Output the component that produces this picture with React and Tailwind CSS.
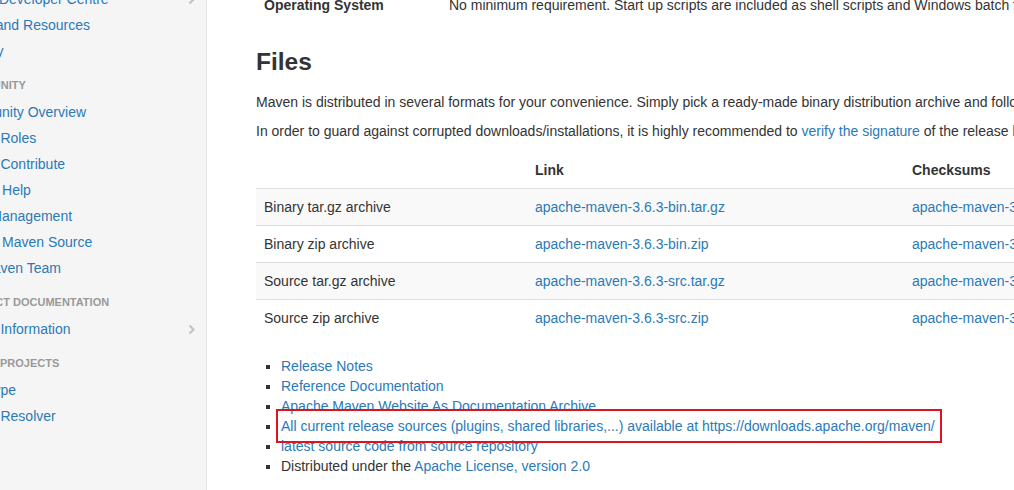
const blue = "text-[#2a7ab8]";

const Chevron = () => (
  <svg width="8" height="11" viewBox="0 0 8 11" fill="none">
    <path d="M1.5 1.5 L5.5 5.5 L1.5 9.5" stroke="#c4c4c4" strokeWidth="2.2" />
  </svg>
);

const sideNav = [
  { label: "Maven Developer Centre", more: true },
  { label: "Books and Resources" },
  { label: "Security" },
  { header: "Community" },
  { label: "Community Overview" },
  { label: "Project Roles" },
  { label: "How to Contribute" },
  { label: "Getting Help" },
  { label: "Issue Management" },
  { label: "Getting Maven Source" },
  { label: "The Maven Team" },
  { header: "Project Documentation" },
  { label: "Project Information", more: true },
  { header: "Maven Projects" },
  { label: "Archetype" },
  { label: "Artifact Resolver" },
];

const files = [
  { name: "Binary tar.gz archive", file: "apache-maven-3.6.3-bin.tar.gz" },
  { name: "Binary zip archive", file: "apache-maven-3.6.3-bin.zip" },
  { name: "Source tar.gz archive", file: "apache-maven-3.6.3-src.tar.gz" },
  { name: "Source zip archive", file: "apache-maven-3.6.3-src.zip" },
];

function Sidebar() {
  return (
    <aside className="w-[207px] shrink-0 h-full bg-[#f5f5f5] border-r border-[#e3e3e3] overflow-hidden">
      <div className="-ml-[47px] -mt-[14px] pr-[10px] whitespace-nowrap">
        {sideNav.map((item, i) =>
          item.header ? (
            <div
              key={i}
              className="mt-[11px] mb-[4px] h-[20px] leading-[20px] pl-[5px] text-[11px] font-bold uppercase text-[#999]"
            >
              {item.header}
            </div>
          ) : (
            <div key={i} className="flex items-center justify-between h-[26px] text-[14px]">
              <span className={blue}>{item.label}</span>
              {item.more && <Chevron />}
            </div>
          )
        )}
      </div>
    </aside>
  );
}

function FilesTable() {
  return (
    <table className="w-[1200px] border-collapse text-[14px] leading-[20px] mb-[20px]">
      <thead>
        <tr className="text-left">
          <th className="w-[271px] px-[8px] py-[8px]"></th>
          <th className="w-[377px] px-[8px] py-[8px] font-bold">Link</th>
          <th className="px-[8px] py-[8px] font-bold">Checksums</th>
        </tr>
      </thead>
      <tbody>
        {files.map((f, i) => (
          <tr key={f.name} className={i % 2 === 0 ? "bg-[#f9f9f9]" : "bg-white"}>
            <td className="px-[8px] py-[8px] border-t border-[#ddd]">{f.name}</td>
            <td className={`px-[8px] py-[8px] border-t border-[#ddd] ${blue}`}>{f.file}</td>
            <td className={`px-[8px] py-[8px] border-t border-[#ddd] ${blue}`}>{f.file}.sha512</td>
          </tr>
        ))}
      </tbody>
    </table>
  );
}

export default function App() {
  return (
    <div
      className="w-[1014px] h-[490px] overflow-hidden flex bg-white text-[#333]"
      style={{ fontFamily: '"Liberation Sans", Arial, sans-serif' }}
    >
      <Sidebar />
      <main className="flex-1 min-w-0 overflow-hidden pl-[49px] whitespace-nowrap">
        <div className="-mt-[13px] flex text-[14px] leading-[20px]">
          <div className="w-[185px] shrink-0 p-[8px] font-bold">Operating System</div>
          <div className="p-[8px]">
            No minimum requirement. Start up scripts are included as shell scripts and Windows batch files.
          </div>
        </div>

        <h2 className="mt-[19px] mb-[10px] h-[40px] leading-[40px] text-[24.5px] font-bold">Files</h2>

        <p className="text-[14px] leading-[20px] mb-[9px]">
          Maven is distributed in several formats for your convenience. Simply pick a ready-made binary distribution archive and follow the installation instructions.
        </p>
        <p className="text-[14px] leading-[20px] mb-[11px]">
          In order to guard against corrupted downloads/installations, it is highly recommended to{" "}
          <span className={blue}>verify the signature</span> of the release bundles against the public KEYS used by the Apache Maven developers.
        </p>

        <FilesTable />

        <ul className="list-[square] pl-[25px] text-[14px] leading-[20px] marker:text-[#333]">
          <li className={blue}>Release Notes</li>
          <li className={blue}>Reference Documentation</li>
          <li className={blue}>Apache Maven Website As Documentation Archive</li>
          <li className={`relative ${blue}`}>
            All current release sources (plugins, shared libraries,...) available at https://downloads.apache.org/maven/
            <div className="absolute -left-[5px] -top-[7px] w-[666px] h-[34px] border-2 border-[#dc1420] pointer-events-none" />
          </li>
          <li className={blue}>latest source code from source repository</li>
          <li>
            Distributed under the <span className={blue}>Apache License, version 2.0</span>
          </li>
        </ul>
      </main>
    </div>
  );
}
